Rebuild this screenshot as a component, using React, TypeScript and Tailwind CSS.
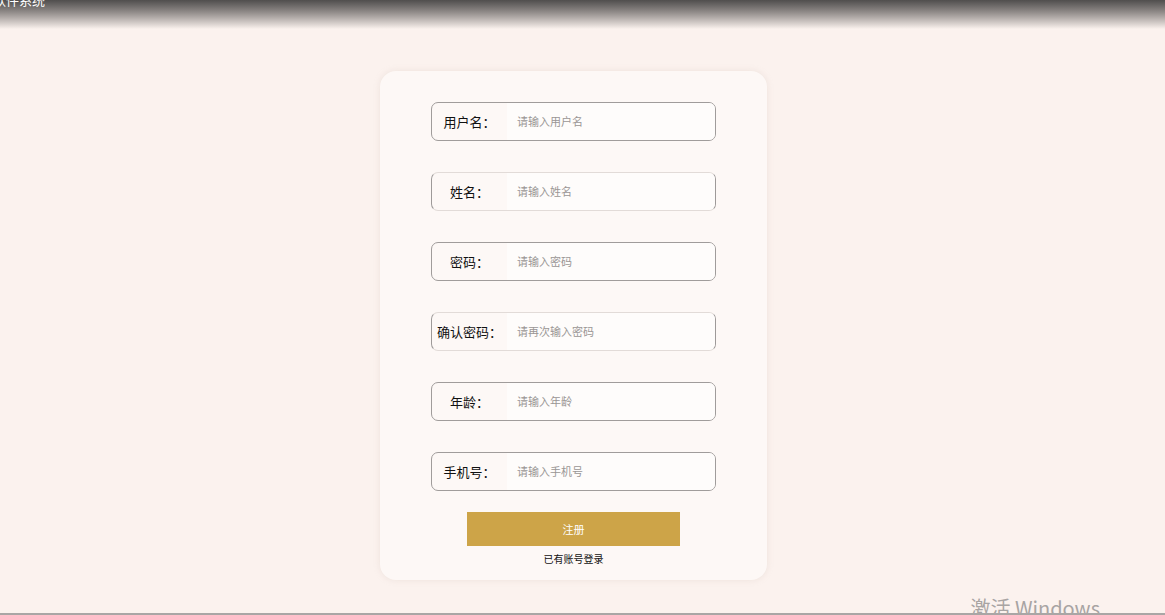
import React from "react";

const fields = [
  { label: "用户名：", placeholder: "请输入用户名", faint: false },
  { label: "姓名：", placeholder: "请输入姓名", faint: true },
  { label: "密码：", placeholder: "请输入密码", faint: false },
  { label: "确认密码：", placeholder: "请再次输入密码", faint: true },
  { label: "年龄：", placeholder: "请输入年龄", faint: false },
  { label: "手机号：", placeholder: "请输入手机号", faint: false },
];

export default function App() {
  return (
    <div
      className="relative w-[1165px] h-[615px] overflow-hidden bg-[#fbf2ee] text-[#111]"
      style={{ fontFamily: '"Noto Sans CJK SC", "Liberation Sans", sans-serif' }}
    >
      {/* header fade */}
      <div className="h-[36px] bg-gradient-to-b from-[#2e2e2e] via-[#8a8583] to-[#fbf2ee] text-white text-[13px] leading-none -mt-[7px]">
        <span className="-ml-[7px]">软件系统</span>
      </div>

      <div className="flex justify-center pt-[42px] pr-[18px]">
        <div className="w-[387px] h-[509px] rounded-[16px] bg-[#fdf8f6] shadow-[0_0_6px_rgba(200,180,170,0.25)] flex flex-col items-center pt-[31px]">
          <div className="flex flex-col gap-[31px]">
            {fields.map((f) => (
              <div
                key={f.label}
                className={`flex w-[285px] h-[39px] rounded-[7px] border ${
                  f.faint ? "border-[#e2dbd8] border-l-[#9e9a99] border-r-[#9e9a99]" : "border-[#a09c9b]"
                } overflow-hidden`}
              >
                <div className="w-[75px] flex items-center justify-center text-[13px] whitespace-nowrap">
                  {f.label}
                </div>
                <input
                  placeholder={f.placeholder}
                  className="flex-1 bg-[#fefcfb] pl-[10px] text-[11px] outline-none placeholder:text-[#9a9695]"
                />
              </div>
            ))}
          </div>
          <button className="mt-[21px] w-[213px] h-[34px] bg-[#cda448] text-white text-[11px]">
            注册
          </button>
          <div className="mt-[5px] text-[10px]">已有账号登录</div>
        </div>
      </div>

      <div className="absolute right-[65px] bottom-[-8px] text-[20px] text-[#a8a4a3]">激活 Windows</div>
      <div className="absolute left-0 right-0 bottom-0 h-[2px] bg-[#a9a6a5]" />
    </div>
  );
}
